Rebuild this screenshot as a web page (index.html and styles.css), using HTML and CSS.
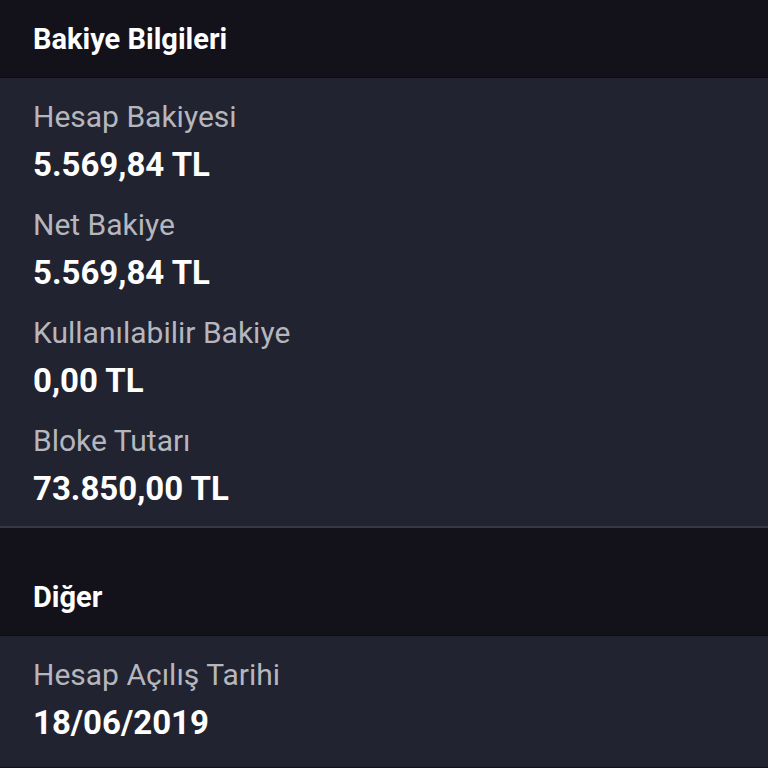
FILE: index.html
```html
<!DOCTYPE html>
<html lang="tr">
<head>
    <meta charset="UTF-8">
    <meta name="viewport" content="width=device-width, initial-scale=1.0">
    <title>Bakiye Bilgileri</title>
    <link rel="stylesheet" href="styles.css">
</head>
<body>
    <div class="section">
        <h2 class="section-title">Bakiye Bilgileri</h2>
        <div class="info-list">
            <div class="info-item">
                <div class="info-label">Hesap Bakiyesi</div>
                <div class="info-value">5.569,84 TL</div>
            </div>
            <div class="info-item">
                <div class="info-label">Net Bakiye</div>
                <div class="info-value">5.569,84 TL</div>
            </div>
            <div class="info-item">
                <div class="info-label">Kullanılabilir Bakiye</div>
                <div class="info-value">0,00 TL</div>
            </div>
            <div class="info-item">
                <div class="info-label">Bloke Tutarı</div>
                <div class="info-value">73.850,00 TL</div>
            </div>
        </div>
    </div>

    <div class="section section-spaced">
        <h2 class="section-title">Diğer</h2>
        <div class="info-list info-list-last">
            <div class="info-item">
                <div class="info-label">Hesap Açılış Tarihi</div>
                <div class="info-value">18/06/2019</div>
            </div>
        </div>
    </div>
</body>
</html>
```

FILE: styles.css
```css
body {
    font-family: 'Roboto', 'Liberation Sans', sans-serif;
    background-color: #13121b;
    margin: 0;
    padding: 0;
    color: #ffffff;
}

.section-spaced {
    padding-top: 30px;
}

.section-title {
    margin: 0;
    height: 78px;
    line-height: 78px;
    padding: 0 33px;
    font-size: 29px;
    font-weight: bold;
    color: #ffffff;
    background-color: #13121b;
    border-bottom: 1px solid #0e0d15;
    box-sizing: border-box;
}

.info-list {
    background-color: #212330;
    padding: 15px 33px 13px;
    display: flex;
    flex-direction: column;
    gap: 12px;
    border-bottom: 2px solid #363846;
}

.info-list-last {
    border-bottom: none;
    min-height: 103px;
}

.info-label {
    font-size: 30px;
    line-height: 48px;
    color: #b5b6be;
}

.info-value {
    font-size: 33px;
    line-height: 48px;
    font-weight: bold;
    color: #ffffff;
}
```
